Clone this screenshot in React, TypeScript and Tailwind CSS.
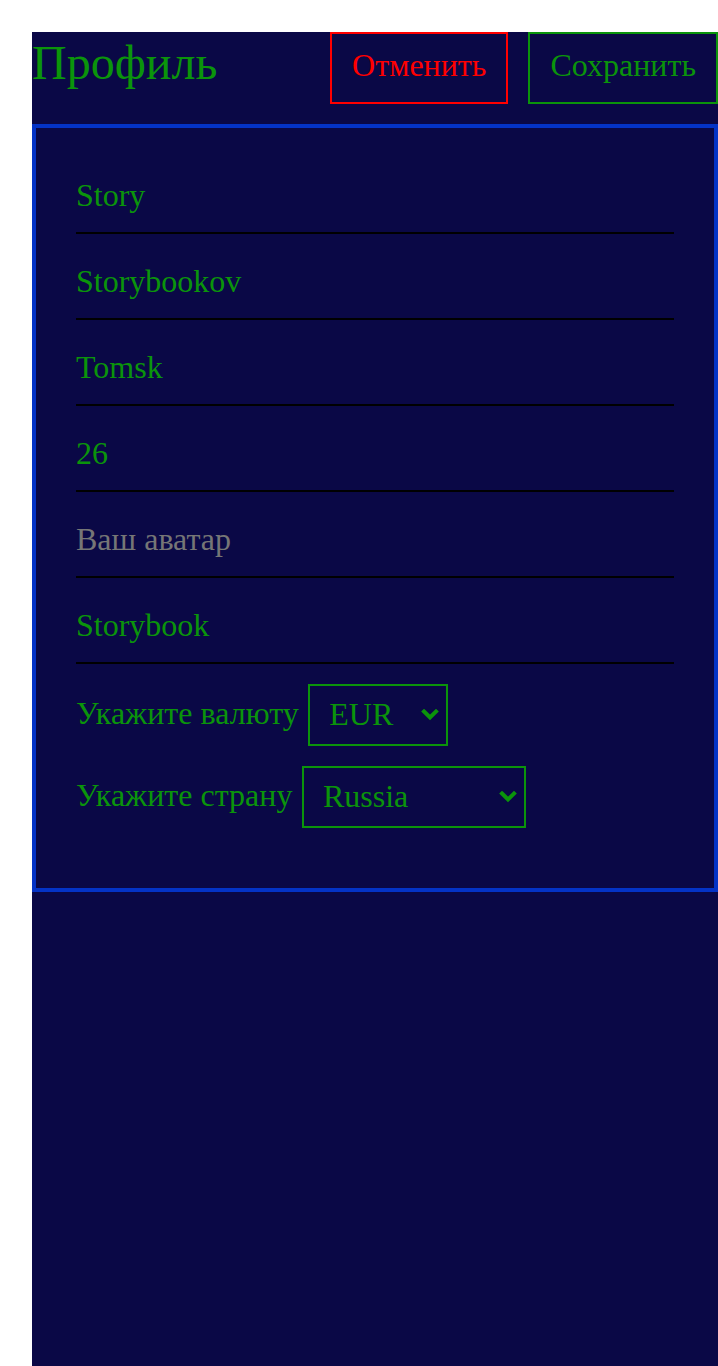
import { type FC } from "react"

const Chevron: FC = () => (
  <svg
    className="pointer-events-none absolute right-[9px] top-1/2 -translate-y-1/2"
    width="18"
    height="13"
    viewBox="0 0 18 13"
    fill="none"
  >
    <polyline points="3,3 9,9 15,3" stroke="#0b940b" strokeWidth="4" strokeLinecap="square" />
  </svg>
)

const fields = [
  { value: "Story", placeholder: "Ваше имя" },
  { value: "Storybookov", placeholder: "Ваша фамилия" },
  { value: "Tomsk", placeholder: "Город" },
  { value: "26", placeholder: "Возраст" },
  { value: "", placeholder: "Ваш аватар" },
  { value: "Storybook", placeholder: "Имя пользователя" },
]

export default function App() {
  return (
    <div className="min-h-screen bg-white pl-[32px] pt-[32px] font-['Liberation_Serif',serif]">
      <div className="min-h-[1334px] bg-[#0a0846] text-[#0b940b]">
        <div className="flex items-start justify-between pb-[20px]">
          <h1 className="mt-[3px] text-[48px] leading-[55px] font-normal">Профиль</h1>
          <div className="flex gap-[20px]">
            <button className="border-2 border-[#ff0000] px-[20px] pt-[12px] pb-[18px] text-[32px] leading-[38px] text-[#ff0000]">
              Отменить
            </button>
            <button className="border-2 border-[#0b940b] px-[20px] pt-[12px] pb-[18px] text-[32px] leading-[38px] text-[#0b940b]">
              Сохранить
            </button>
          </div>
        </div>

        <div className="border-4 border-[#0433c6] px-[40px] pt-[20px] pb-[60px] text-[32px]">
          {fields.map((f) => (
            <input
              key={f.placeholder}
              defaultValue={f.value}
              placeholder={f.placeholder}
              className="block w-full border-b-2 border-black bg-transparent pt-[29px] pb-[19px] leading-[36px] text-[#0b940b] outline-none placeholder:text-[#767676]"
            />
          ))}

          <div className="mt-[20px] flex items-center gap-[9.5px]">
            <span className="pb-[4px]">Укажите валюту</span>
            <div className="relative">
              <select
                defaultValue="EUR"
                className="h-[62px] w-[140px] appearance-none border-2 border-[#0b940b] bg-transparent pb-[3px] pl-[19px] text-[#0b940b] outline-none"
              >
                <option>EUR</option>
                <option>RUB</option>
                <option>USD</option>
              </select>
              <Chevron />
            </div>
          </div>

          <div className="mt-[20px] flex items-center gap-[9.5px]">
            <span className="pb-[4px]">Укажите страну</span>
            <div className="relative">
              <select
                defaultValue="Russia"
                className="h-[62px] w-[224px] appearance-none border-2 border-[#0b940b] bg-transparent pb-[3px] pl-[19px] text-[#0b940b] outline-none"
              >
                <option>Russia</option>
                <option>Belarus</option>
                <option>Ukraine</option>
                <option>Kazakhstan</option>
                <option>Armenia</option>
              </select>
              <Chevron />
            </div>
          </div>
        </div>
      </div>
    </div>
  )
}
